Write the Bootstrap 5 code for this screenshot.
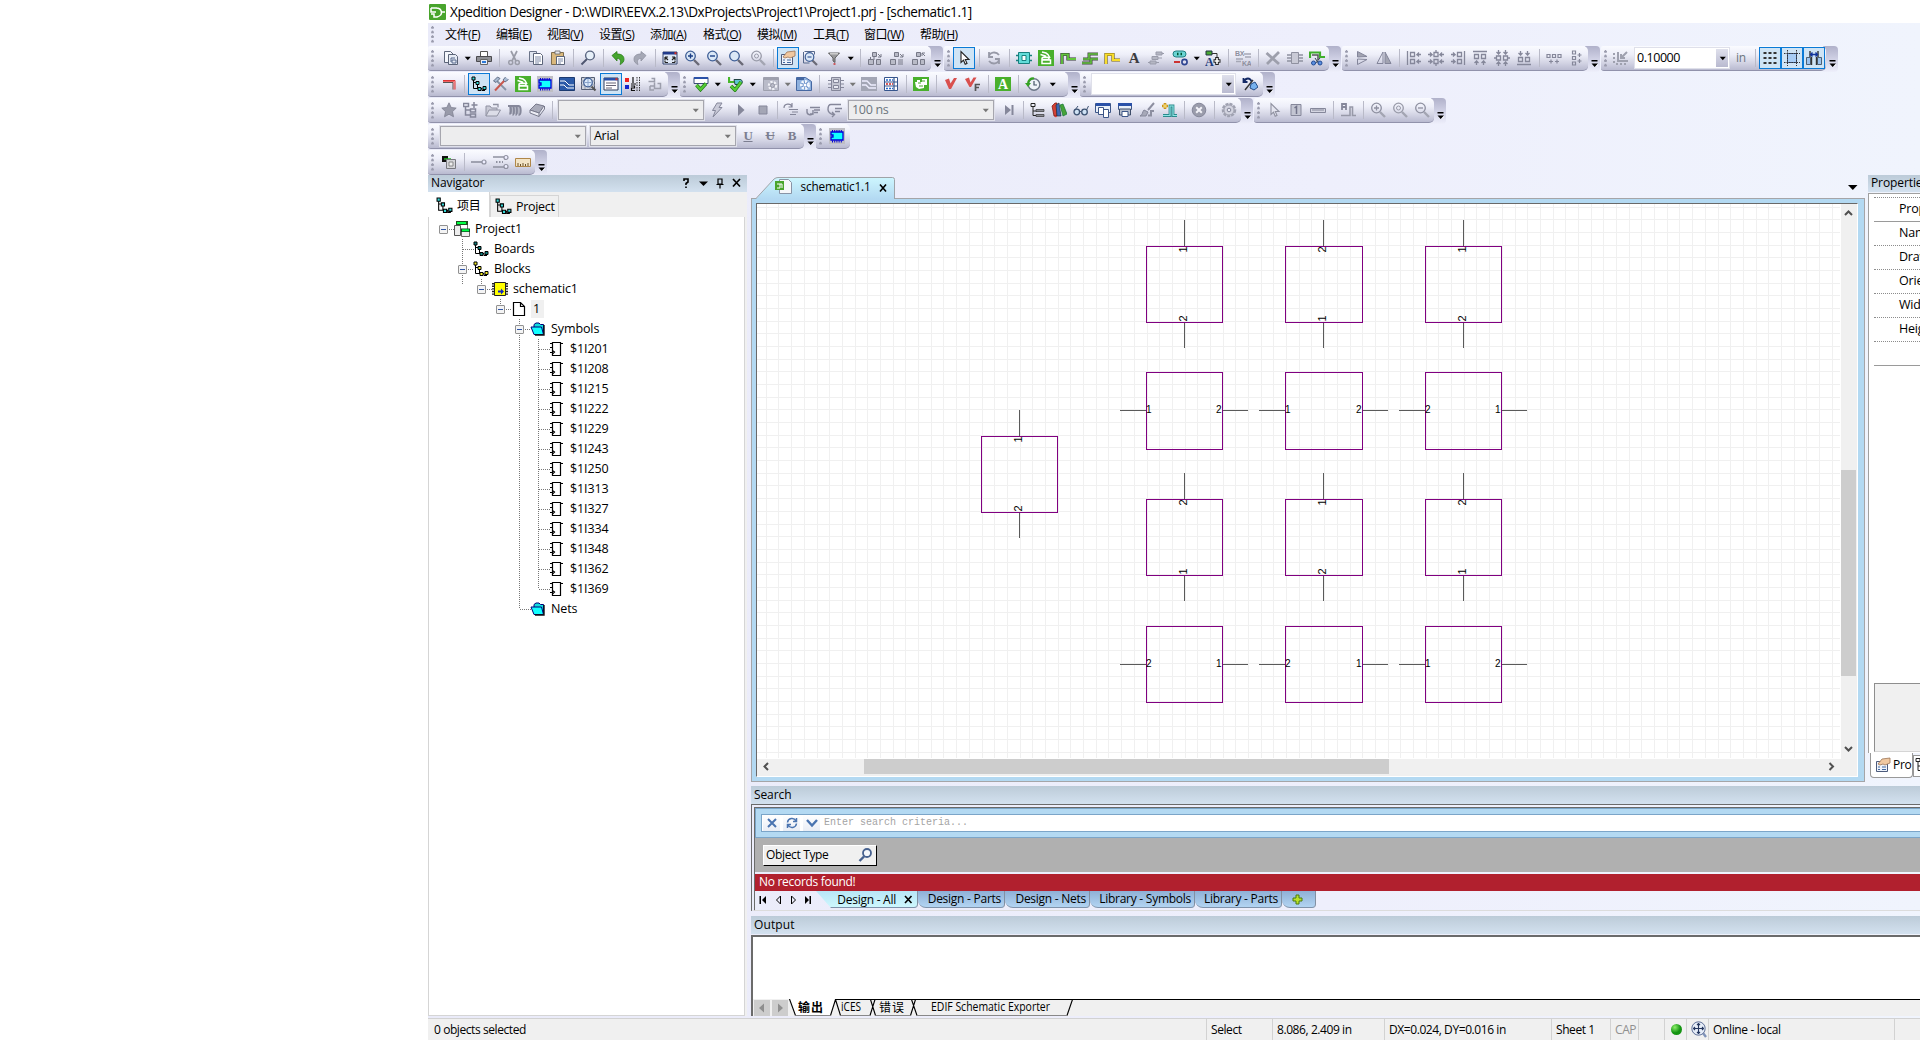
<!DOCTYPE html>
<html lang="zh-CN">
<head>
<meta charset="utf-8">
<title>Xpedition Designer</title>
<link href="https://cdn.jsdelivr.net/npm/bootstrap@5.3.0/dist/css/bootstrap.min.css" rel="stylesheet">
<style>
body{width:1920px;height:1040px;overflow:hidden;background:#fff;color:#000;font:12px/16px "Open Sans","Noto Sans CJK SC",sans-serif;letter-spacing:-.3px}
.app{margin-left:428px;width:1492px;height:1040px;background:linear-gradient(90deg,#eaebf9,#eeeffc 60%,#f0f4fd)}
.titlebar{height:23px;background:#fff;font-size:13.6px;letter-spacing:-.46px;padding-left:1px}
.menurow{height:23px;display:grid;grid-template-columns:17px 51px 51px 52px 51px 53px 54px 56px 51px 56px 60px;align-items:center;white-space:nowrap;letter-spacing:-.45px}
.tbrow{height:26px}
.tbar{height:25px;margin-right:1px}
.tbody{height:25px;background:linear-gradient(#fafbff,#eeeff9 35%,#d3d4e4 70%,#b9bad0);border-bottom:1px solid #9192ab;border-radius:2px 5px 5px 3px;margin-right:-3px;padding-right:1px;position:relative;z-index:1}
.tend{width:15px;height:26px;background:linear-gradient(#b0b1ca,#d6d7ea 60%,#eeeffb);border-radius:0 4px 4px 0;display:flex;align-items:flex-end;justify-content:flex-end}
.tend svg{margin:0 2px 4px 0}
.grip{width:12px;height:17px;flex:none;background:radial-gradient(circle at 1.5px 1.5px,#9b9cae 1.2px,transparent 1.5px) 3px 0/4px 4.6px repeat-y}
.grip.g9{width:9px}.grip.g10{width:10px}
.icn{width:22px;height:22px;flex:none;display:flex;align-items:center;justify-content:center}
.icn.on{background:#cfe4f5;border:1px solid #0a7ad6}
.sep{width:8px;flex:none;height:18px;background:linear-gradient(#b9bac8,#b9bac8) 4px 0/1px 100% no-repeat}
.sep.slim{width:6px;background-position-x:3px}
.dar{width:11px;flex:none;display:flex;justify-content:center}
.combo{height:20px;border:1px solid #a6a6ae;background:#ededee;outline:1px solid #dfe0ea;color:#000;padding:0 3px 0 3px;font-size:12.5px;flex:none}
.combo.wht{background:#fff;border-color:#fff;padding-left:1px;letter-spacing:-.45px}
.combo .dbtn{width:12px;height:18px;background:linear-gradient(#dfe0ec,#b9bad0);margin-right:-3px}
.ser{font:bold 13px/16px "Liberation Serif",serif;color:#7c7e90}
.phead{height:17px;background:linear-gradient(#bccbd8,#d3e1ef);padding-left:3px;padding-right:5px;padding-bottom:1px;letter-spacing:-.1px}
.nav-wrap{width:319px;background:#f0f0f0;height:841px}
.navtabs{height:25px}
.ntab{border:1px solid #d5d5d5;border-bottom:0;background:#f0f0f0;height:22px;padding:0 3px 0 4px}
.ntab.act{background:#fff;height:25px;border:0;padding-top:2px;border-right:1px solid #d5d5d5;width:62px}
.treebox{height:799px;width:317px;background:#fff;border:1px solid #d5d5d5;border-width:0 1px 1px;position:relative;padding-top:2px;font-size:12.5px;letter-spacing:-.1px}
.trow{height:20px;display:flex;align-items:center;position:relative}
.trow .exp{width:9px;height:9px;margin-right:6px;flex:none}
.trow .exp.o{border:1px solid #919191;border-radius:1px;background:linear-gradient(#2f55a8,#2f55a8) 1px 3px/5px 1px no-repeat,#f4f4f4}
.trow svg{margin-right:5px;flex:none}
.l0{padding-left:10px}.l1{padding-left:29px}.l2{padding-left:48px}.l3{padding-left:67px}.l4{padding-left:86px}.l5{padding-left:104px}
.l5 svg{margin-right:6px!important}
.pgno{background:#f0f0f0;padding:1px 4px 1px 2px;margin-left:-1px}
.lines{position:absolute;left:0;top:0}
.rcol{width:1169px;margin-left:4px}
.mditabs{height:23px}
.mditab{position:relative;z-index:1}
.mdi{width:1114px;height:584px;background:#b3d9f2;border:1px solid #a5a5a8;padding:4px}
.mdi-in{height:574px;border:1px solid #fff;border-top:1px solid #696969;border-left:1px solid #696969;background:#f0f0f0;width:1102px}
.vsb{width:15px;background:#f0f0f0;height:555px}
.thumb{background:#cdcdcd}
.vthumb{height:206px}.hthumb{width:525px}
.props{width:52px;overflow:hidden;margin-left:3px}
.pgrid{height:560px;background:#fff;border-left:1px solid #a0a0a0;border-top:1px solid #a0a0a0;margin-top:1px;white-space:nowrap;font-size:12.5px}
.prow{height:24px;border-bottom:1px dotted #8c8c8c;padding:3px 0 0 25px;margin-left:5px;letter-spacing:-.2px}
.prow.sol{border-bottom:1px solid #9a9a9a}
.ptop{height:4px;border-bottom:1px dotted #8c8c8c;margin-left:5px}
.phelp{margin:317px 0 0 5px;height:69px;background:#f0f0f0;border:1px solid #8e8e8e;border-right:0;border-bottom-color:#d5d5d5}
.ptab{width:43px;flex:none;height:25px;margin-left:2px;border:1px solid #999;border-top:0;border-radius:0 0 4px 4px}
.ptab2{height:22px;width:20px;flex:none;margin-top:2px;border:1px solid #999}
.tall{margin-top:5px;height:18px}
.searchp{height:107px;border-left:4px double #6b6b6b;border-top:4px double #6b6b6b;border-bottom:1px solid #dcdcdc}
.sblue{height:30px;background:#b3d9f2;border:1px solid #7ba5c8;border-right:0;padding:5px 0 0 5px}
.sinput{height:18px;background:#fff;border:1px solid #7ba5c8;border-right:0;padding-left:1px;gap:3px}
.sbtn{width:17px;height:16px;background:linear-gradient(#fff,#e9edf5);display:flex;align-items:center;justify-content:center}
.mono{font:10px/14px "Liberation Mono",monospace;letter-spacing:0;color:#a4a4a4;padding-left:1px}
.sgray{height:34px;background:#b0b0b0;padding:7px 0 0 8px}
.otype{width:114px;height:21px;background:#f0f0f0;border:1px solid #fff;border-right-color:#000;border-bottom-color:#000;padding:0 3px 1px 2px;letter-spacing:-.35px}
.redbar{height:17px;background:#b1202e;color:#fff;padding:0 0 1px 4px;margin-top:2px}
.stabs{height:17px}
.stab{height:17px;background:linear-gradient(#8fb0d6,#b2d4f2);border-right:1px solid #8290a2;border-bottom:1px solid #7f93ab;border-radius:0 0 4px 8px;text-align:right;padding-right:3px;white-space:nowrap;letter-spacing:-.26px;line-height:15px}
.stab.act{background:linear-gradient(#b8e6f7,#cdf7fd);clip-path:polygon(0 0,100% 0,100% 100%,15px 100%);gap:8px;padding-right:4px}
.outp{height:64px;background:#fff;border-top:2px solid #6b6b6b;border-left:2px solid #6b6b6b;margin-top:1px}
.otabs{height:17px;background:#f0f0f0}
.sts{height:22px;background:#f0f0f0;border-top:1px solid #d2d2d2;width:1492px;white-space:nowrap;letter-spacing:-.42px}
.sts>div{height:21px;border-right:1px solid #d2d2d2;padding:0 0 0 5px;display:flex;align-items:center;flex:none}
</style>
<script src="https://cdn.jsdelivr.net/npm/bootstrap@5.3.0/dist/js/bootstrap.bundle.min.js"></script>
</head>
<body>
<svg width="0" height="0" class="position-absolute">
<defs>
<symbol id="copydoc" viewBox="0 0 16 16"><path d="M1.500 1.500h6l3 3v8h-9z" fill="#f4f6fb" stroke="#5b6478"/><path d="M5.500 4.500h7l2 2v8h-9z" fill="#e6ebf5" stroke="#5b6478"/><path d="M8 12V8h4M9 10h4v3H9z" fill="none" stroke="#56688c"/></symbol>
<symbol id="print" viewBox="0 0 16 16"><path d="M4.500 1.500h7v5h-7z" fill="#fff" stroke="#555"/><path d="M.5 6.500h15v5H.5z" fill="#8e8f94" stroke="#4a4a4e"/><path d="M4.500 9.500h7v5h-7z" fill="#e9f0fa" stroke="#666"/><path d="M6 12h4" stroke="#2d79d8" stroke-width="2"/></symbol>
<symbol id="cut" viewBox="0 0 16 16"><path d="M5 1l5 10M11 1L6 11" stroke="#9a9ca8" stroke-width="1.700"/><circle cx="4.700" cy="12.500" r="2" fill="none" stroke="#9a9ca8" stroke-width="1.500"/><circle cx="11.300" cy="12.500" r="2" fill="none" stroke="#9a9ca8" stroke-width="1.500"/></symbol>
<symbol id="copy" viewBox="0 0 16 16"><path d="M1.500 1.500h7v10h-7z" fill="#dfe4ee" stroke="#6b7489"/><path d="M5.500 3.500h7l2 2v9h-9z" fill="#fff" stroke="#5b6478"/><path d="M7 7h6M7 9h6M7 11h6M7 13h4" stroke="#7d89a6"/></symbol>
<symbol id="paste" viewBox="0 0 16 16"><path d="M1.500 2.500h12v12h-12z" fill="#d9b87c" stroke="#7e6d4d"/><path d="M5 1h5v3H5z" fill="#e8e8ea" stroke="#666" stroke-width=".8"/><path d="M6.500 6.500h8v8h-8z" fill="#fff" stroke="#5b6478"/><path d="M8 9h5M8 11h5M8 13h3" stroke="#7d89a6"/></symbol>
<symbol id="find" viewBox="0 0 16 16"><path d="M7 9L1.500 14.500" stroke="#4f5670" stroke-width="2"/><circle cx="10" cy="5.500" r="4.400" fill="#e7f0f9" stroke="#596580" stroke-width="1.400"/></symbol>
<symbol id="undo" viewBox="0 0 16 16"><path d="M2 5.500L7 1.500v2.500c5 0 7 2 7 5.500 0 2-1.500 4-4 5 1-2.500 1-6-3-6.200V11z" fill="#46a52e" stroke="#2b7d1b" stroke-width=".8"/></symbol>
<symbol id="redo" viewBox="0 0 16 16"><path d="M14 5.500L9 1.500V4C4 4 2 6 2 9.500c0 2 1.500 4 4 5-1-2.500-1-6 3-6.200V11z" fill="#a5a8b5" stroke="#8e919f" stroke-width=".8"/></symbol>
<symbol id="fit" viewBox="0 0 16 16"><path d="M1 2h14v12H1z" fill="#dfe8f5" stroke="#36476f"/><path d="M1 2h14v2.500H1z" fill="#213a8b"/><path d="M12.500 2.200h2v2h-2z" fill="#d32"/><path d="M3 7h3M3 7v3m3-3M3 7l3 3M13 7h-3m3 0v3m0-3l-3 3M3 12.500h3M3 12.500v-2M13 12.500h-3m3 0v-2" stroke="#222" fill="none" stroke-width="1.200"/></symbol>
<symbol id="zin" viewBox="0 0 16 16"><path d="M10 10l5 5" stroke="#6a6a76" stroke-width="2.400"/><circle cx="6.500" cy="6" r="4.800" fill="#dbe8f7" stroke="#3f5f96" stroke-width="1.300"/><path d="M4 6h5M6.500 3.500v5" stroke="#1c3f86" stroke-width="1.400"/></symbol>
<symbol id="zout" viewBox="0 0 16 16"><path d="M10 10l5 5" stroke="#6a6a76" stroke-width="2.400"/><circle cx="6.500" cy="6" r="4.800" fill="#dbe8f7" stroke="#3f5f96" stroke-width="1.300"/><path d="M4 6h5" stroke="#1c3f86" stroke-width="1.400"/></symbol>
<symbol id="zoom" viewBox="0 0 16 16"><path d="M10 10l5 5" stroke="#6a6a76" stroke-width="2.400"/><circle cx="6.500" cy="6" r="4.800" fill="#dbe8f7" stroke="#3f5f96" stroke-width="1.300"/></symbol>
<symbol id="zoomg" viewBox="0 0 16 16"><path d="M10 10l5 5" stroke="#a3a5b2" stroke-width="2.400"/><circle cx="6.500" cy="6" r="4.800" fill="none" stroke="#999ba9" stroke-width="1.300"/><circle cx="6.500" cy="6" r="2" fill="none" stroke="#999ba9"/></symbol>
<symbol id="zing" viewBox="0 0 16 16"><path d="M10 10l5 5" stroke="#a3a5b2" stroke-width="2.400"/><circle cx="6.500" cy="6" r="4.800" fill="none" stroke="#8e90a0" stroke-width="1.300"/><path d="M4 6h5M6.500 3.500v5" stroke="#8e90a0" stroke-width="1.300"/></symbol>
<symbol id="zoutg" viewBox="0 0 16 16"><path d="M10 10l5 5" stroke="#a3a5b2" stroke-width="2.400"/><circle cx="6.500" cy="6" r="4.800" fill="none" stroke="#8e90a0" stroke-width="1.300"/><path d="M4 6h5" stroke="#8e90a0" stroke-width="1.300"/></symbol>
<symbol id="props" viewBox="0 0 16 16"><path d="M1.500 4.500h11v10h-11z" fill="#eef3fb" stroke="#4c5b7c"/><path d="M3 10h2M7 10h4M3 12.500h2M7 12.500h4" stroke="#42689f"/><path d="M3 7l4-5 8-1v5l-5 2-2-1-3 1z" fill="#f0c8a0" stroke="#9c7454" stroke-width=".8"/></symbol>
<symbol id="zdoc" viewBox="0 0 16 16"><path d="M2.500 1.500h10v3M1.500 2v11h6" fill="none" stroke="#56688c"/><path d="M10 10l5 5" stroke="#6a6a76" stroke-width="2.200"/><circle cx="7.500" cy="7" r="4.300" fill="#dbe8f7" stroke="#3f5f96" stroke-width="1.200"/><path d="M5.500 7h4" stroke="#1c3f86"/></symbol>
<symbol id="filter" viewBox="0 0 16 16"><path d="M2.500 3h11L9 8v4.500L7 11V8z" fill="#9a9a9c" stroke="#555" stroke-width=".9"/><path d="M4 3.800h8" stroke="#eee"/><path d="M7.500 14h2" stroke="#c33" stroke-width="1.500"/></symbol>
<symbol id="h1" viewBox="0 0 16 16"><g fill="#b9bbc7" stroke="#777987"><path d="M5.500 2.500h4v4h-4zM1.500 9.500h5v5h-5zM9.500 9.500h4v5h-4z"/></g><path d="M11 4l3 3m0-3v3h-3M7 6v4M3.500 9V7" stroke="#777987" fill="none"/></symbol>
<symbol id="h2" viewBox="0 0 16 16"><g fill="#b9bbc7" stroke="#777987"><path d="M5.500 2.500h4v4h-4zM1.500 9.500h5v5h-5z"/></g><path d="M11 4l3 3m0-3v3h-3M9 10h5M9 12h5M9 14h5" stroke="#777987" fill="none"/></symbol>
<symbol id="h3" viewBox="0 0 16 16"><g fill="#b9bbc7" stroke="#777987"><path d="M5.500 2.500h4v4h-4zM1.500 9.500h5v5h-5zM9.500 9.500h4v5h-4z"/></g><path d="M14 6l-3-3m0 3V3h3" stroke="#777987" fill="none"/></symbol>
<symbol id="cursor" viewBox="0 0 16 16"><path d="M5 1.500v11l2.500-2.300 1.700 4 1.800-.8-1.700-3.900H13z" fill="#fff" stroke="#222" stroke-width="1.100"/></symbol>
<symbol id="cursorg" viewBox="0 0 16 16"><path d="M5 1.500v11l2.500-2.300 1.700 4 1.800-.8-1.700-3.900H13z" fill="#e4e5ef" stroke="#8f91a0" stroke-width="1.100"/></symbol>
<symbol id="refreshg" viewBox="0 0 16 16"><path d="M3 7c0-5 7-6 10-2M13 9c0 5-7 6-10 2M3 2v5h4M13 14V9H9" fill="none" stroke="#9799a7" stroke-width="1.800"/></symbol>
<symbol id="chip" viewBox="0 0 16 16"><path d="M2.500 2.500h11v11h-11z" fill="#62dcd9" stroke="#17807f"/><path d="M6 5.500h4v5H6z" fill="#fff" stroke="#17807f"/><path d="M0 5.500h2.500M0 10.500h2.500M13.500 5.500H16M13.500 10.500H16" stroke="#17807f" stroke-width="1.500"/></symbol>
<symbol id="glogo" viewBox="0 0 16 16"><path d="M0 0h16v16H0z" fill="#49b02c"/><path d="M4 2l4 1c2 1 3 2 4 5M2.500 4.500l5 1.500v2M4 8.500c0-2 7-2 7 0v1H4zM4 10h8.500v3.500H4z" fill="none" stroke="#fff" stroke-width="1.500"/></symbol>
<symbol id="net1" viewBox="0 0 16 16"><path d="M2 14V4.500h6V9h8" fill="none" stroke="#333" stroke-width="3.200"/><path d="M2 14V4.500h6V9h8" fill="none" stroke="#62c63d" stroke-width="1.800"/></symbol>
<symbol id="net2" viewBox="0 0 16 16"><path d="M0 13h9V9h7M1 9h6V4h9" fill="none" stroke="#444" stroke-width="3"/><path d="M0 13h9V9h7M1 9h6V4h9" fill="none" stroke="#62c63d" stroke-width="1.600"/></symbol>
<symbol id="net3" viewBox="0 0 16 16"><path d="M2 14V4.500h7V10h7" fill="none" stroke="#7a6512" stroke-width="3.200"/><path d="M2 14V4.500h7V10h7" fill="none" stroke="#f7dc2c" stroke-width="2"/></symbol>
<symbol id="stackg" viewBox="0 0 16 16"><path d="M8 2h6v3H8zM4 6.500h6v3H4zM2 11h6v3H2zM14 3.500h2M10 8h4M0 12.500h2M8 12.500h3" fill="#b4b6c3" stroke="#9a9cab"/></symbol>
<symbol id="conn" viewBox="0 0 16 16"><rect x="1" y="1" width="13" height="6" rx="3" fill="#6ad4d3" stroke="#217f80"/><path d="M5 4h1.500M8.500 4H10" stroke="#053" stroke-width="2.500"/><path d="M2 12h6" stroke="#c33" stroke-width="2"/><circle cx="12.500" cy="12" r="2.600" fill="#dde" stroke="#2c4390" stroke-width="1.600"/></symbol>
<symbol id="aplus" viewBox="0 0 16 16"><path d="M1 1h6v4H1z" fill="#48a832" stroke="#234"/><path d="M7 3.500h5v4" fill="none" stroke="#333"/><text x="0" y="15.500" font-family="Liberation Serif" font-weight="700" font-size="12" fill="#1a3877">A</text><path d="M12 7v8M8.500 11h7" stroke="#222" stroke-width="3.600"/><path d="M12 8v6M9.500 11h5" stroke="#fff" stroke-width="1.600"/></symbol>
<symbol id="swapg" viewBox="0 0 16 16"><text x="0" y="6" font-family="Liberation Sans" font-weight="700" font-size="7" fill="#8e909e">BX</text><text x="7" y="15.500" font-family="Liberation Sans" font-weight="700" font-size="7" fill="#8e909e">KA</text><path d="M1 9h7M1 11.500h5M9 4h7M10 7h6" stroke="#a5a7b5" stroke-width="1.500"/></symbol>
<symbol id="xg" viewBox="0 0 16 16"><path d="M1.500 3L14 14M14 2L2 14" stroke="#9d9fac" stroke-width="2.800"/></symbol>
<symbol id="chipg" viewBox="0 0 16 16"><path d="M4.500 2.500h7v11h-7z" fill="#c9cad6" stroke="#8f91a0"/><path d="M0 5h4M0 8h4M0 11h4M12 5h4M12 8h4M12 11h4" stroke="#8f91a0" stroke-width="1.400"/></symbol>
<symbol id="cutnet" viewBox="0 0 16 16"><path d="M1 8V2.500h10V7h5" fill="none" stroke="#3faf2b" stroke-width="2.200"/><path d="M3 5h6v5" stroke="#555" fill="none" stroke-width="1.500"/><path d="M6 8l4 6M11 8l-5 6" stroke="#345"/><circle cx="4.500" cy="13" r="2" fill="#5b8fe0" stroke="#234c96"/><circle cx="11" cy="13" r="2" fill="#5b8fe0" stroke="#234c96"/></symbol>
<symbol id="flipv" viewBox="0 0 16 16"><path d="M3.500 1.500V7L13 6.500z" fill="#a2a4b2" stroke="#83859a"/><path d="M3.500 14.500V9L13 9.500z" fill="none" stroke="#83859a"/></symbol>
<symbol id="fliph" viewBox="0 0 16 16"><path d="M7 2v11.500H1z" fill="none" stroke="#83859a"/><path d="M9 2v11.500h6z" fill="#a2a4b2" stroke="#83859a"/></symbol>
<symbol id="al1" viewBox="0 0 16 16"><path d="M1.500 1v14M4.500 2.500h4v4h-4zM4.500 9.500h4v4h-4zM15 4.500h-4l2-2m-2 2l2 2M15 11.500h-4l2-2m-2 2l2 2" fill="none" stroke="#85879a" stroke-width="1.300"/></symbol>
<symbol id="al2" viewBox="0 0 16 16"><path d="M6 2.500h4v4H6zM6 9.500h4v4H6zM8 0v2M8 14v2M0 4.500h4l-2-2m2 2l-2 2M0 11.500h4l-2-2m2 2l-2 2M16 4.500h-4l2-2m-2 2l2 2M16 11.500h-4l2-2m-2 2l2 2" fill="none" stroke="#85879a" stroke-width="1.300"/></symbol>
<symbol id="al3" viewBox="0 0 16 16"><path d="M14.500 1v14M7.500 2.500h4v4h-4zM7.500 9.500h4v4h-4zM1 4.500h4l-2-2m2 2l-2 2M1 11.500h4l-2-2m2 2l-2 2" fill="none" stroke="#85879a" stroke-width="1.300"/></symbol>
<symbol id="al4" viewBox="0 0 16 16"><path d="M1 1.500h14M2.500 4.500h4v4h-4zM9.500 4.500h4v4h-4zM4.500 15v-4l-2 2m2-2l2 2M11.500 15v-4l-2 2m2-2l2 2" fill="none" stroke="#85879a" stroke-width="1.300"/></symbol>
<symbol id="al5" viewBox="0 0 16 16"><path d="M2.500 6h4v4h-4zM9.500 6h4v4h-4zM0 8h2M14 8h2M4.500 0v4l-2-2m2 2l2-2M11.500 0v4l-2-2m2 2l2-2M4.500 16v-4l-2 2m2-2l2 2M11.500 16v-4l-2 2m2-2l2 2" fill="none" stroke="#85879a" stroke-width="1.300"/></symbol>
<symbol id="al6" viewBox="0 0 16 16"><path d="M1 14.500h14M2.500 7.500h4v4h-4zM9.500 7.500h4v4h-4zM4.500 1v4l-2-2m2 2l2-2M11.500 1v4l-2-2m2 2l2-2" fill="none" stroke="#85879a" stroke-width="1.300"/></symbol>
<symbol id="d1" viewBox="0 0 16 16"><path d="M1 4.500h3v3H1zM6.500 4.500h3v3h-3zM12 4.500h3v3h-3zM3 11.500h4M9 11.500h4M5 9.500v4M11 9.500v4" fill="none" stroke="#85879a" stroke-width="1.200"/></symbol>
<symbol id="d2" viewBox="0 0 16 16"><path d="M4.500 1h3v3h-3zM4.500 6.500h3v3h-3zM4.500 12h3v3h-3zM11.500 3v4M11.500 9v4M9.500 5h4M9.500 11h4" fill="none" stroke="#85879a" stroke-width="1.200"/></symbol>
<symbol id="scaleg" viewBox="0 0 16 16"><path d="M5 2v9h10M14 2L8 8M8 4v4h4" fill="none" stroke="#9fa1af" stroke-width="2"/><path d="M1 3v10M3 14h12" stroke="#9fa1af" stroke-width="2" stroke-dasharray="2 2"/></symbol>
<symbol id="grid9" viewBox="0 0 16 16"><path d="M1.500 3h14M1.500 8h14M1.500 13h14" stroke="#333" stroke-width="2" stroke-dasharray="3 2"/></symbol>
<symbol id="crop" viewBox="0 0 16 16"><path d="M3.500 3.500h9v9h-9z" fill="#a8cdf5" stroke="#395a8e"/><path d="M3.500 0v16M12.500 0v16M0 3.500h16M0 12.500h16" stroke="#333" stroke-dasharray="1.500 1"/></symbol>
<symbol id="meas" viewBox="0 0 16 16"><path d="M.500 7.500h4v7h-4zM11.500 7.500h4v7h-4z" fill="#9cc3ee" stroke="#345" stroke-width=".8"/><path d="M4 1v6M12 1v6M5.500 7v8M10.500 7v8" stroke="#333" stroke-width="1.400"/><path d="M4.500 4.500h7M6.500 2.500l-2 2 2 2M9.500 2.500l2 2-2 2" stroke="#12349c" fill="none" stroke-width="1.400"/></symbol>
<symbol id="redl" viewBox="0 0 16 16"><path d="M2 4.500h12v9" fill="none" stroke="#d33"/><path d="M2 6.500h10v7" fill="none" stroke="#555"/><path d="M2 5.500h11v8" fill="none" stroke="#e66"/></symbol>
<symbol id="treei" viewBox="0 0 16 16"><path d="M2.500 2v10.500H7M2.500 6.500h4v6H11v2h3" fill="none" stroke="#000"/><path d="M1 1h3v3H1zM5 5.500h3v3H5zM7 11.500h3v3H7zM12 10.500h3v3h-3z" fill="#35d8d8" stroke="#000"/></symbol>
<symbol id="treed" viewBox="0 0 16 16"><path d="M2.500 2v10.500H7M2.500 6.500h4v6H11v2h3" fill="none" stroke="#000"/><path d="M1 1h3v3H1zM5 5.500h3v3H5zM7 11.500h3v3H7zM12 10.500h3v3h-3z" fill="#0f8080" stroke="#000"/></symbol>
<symbol id="treey" viewBox="0 0 16 16"><path d="M2.500 2v10.500H7M2.500 6.500h4v6H11v2h3" fill="none" stroke="#000"/><path d="M1 1h3v3H1zM5 5.500h3v3H5zM7 11.500h3v3H7zM12 10.500h3v3h-3z" fill="#f6ee24" stroke="#000"/></symbol>
<symbol id="tools" viewBox="0 0 16 16"><path d="M3 4l10 10" stroke="#8793a6" stroke-width="1.800"/><path d="M.500 5l4-4 2.500 1.500-4 4zM12.500 1l-2.500 3 2 2 3.500-2.500" fill="#a9bad2" stroke="#5a6880" stroke-width=".9"/><path d="M11 5L2 14.500" stroke="#c8584e" stroke-width="2"/></symbol>
<symbol id="bchip" viewBox="0 0 16 16"><path d="M0 0h16v16H0z" fill="#bfbfc4"/><path d="M2 4h12v8H2v-3h2V7H2z" fill="#1ff" stroke="#0000d8" stroke-width="1.300"/><path d="M3 3h11M3 13.500h11" stroke="#0000d8" stroke-width="2" stroke-dasharray="1 1.200"/></symbol>
<symbol id="dblue" viewBox="0 0 16 16"><path d="M.500 1.500h15v13H.5z" fill="#2b5aa8" stroke="#1c3a70"/><path d="M1 5h5l4 4h5M1 9h4l3 3h7" stroke="#fff" fill="none"/></symbol>
<symbol id="lens" viewBox="0 0 16 16"><path d="M.500 1.500h13v12H.5z" fill="#cfd4dd" stroke="#555f74"/><path d="M4 1v12M9 1v12M0 5h14M0 9h14" stroke="#939cad"/><path d="M10.500 10.500l4 4" stroke="#555" stroke-width="2.200"/><circle cx="7" cy="6.500" r="4.300" fill="#dcebfb" stroke="#3f5f96" stroke-width="1.200"/><path d="M7 3v7M3.500 6.500h7" stroke="#8aa5cc"/></symbol>
<symbol id="dialog" viewBox="0 0 16 16"><path d="M1 2h14v12H1z" fill="#fff" stroke="#2c3c5c"/><path d="M1 2h14v2.500H1z" fill="#2a51a8"/><path d="M12.500 2.200h2v2h-2z" fill="#d32"/><path d="M3 7h10M3 9.500h10M3 12h6" stroke="#667"/></symbol>
<symbol id="one2" viewBox="0 0 16 16"><path d="M0 2h4v4H0z" fill="#e22"/><path d="M0 9h4v4H0z" fill="#12c"/><path d="M8 1v6M6 8h5M6 10h3.500v2H6.500v2.500H10" stroke="#111" fill="none" stroke-width="1.200"/><path d="M12 1v14M14.500 1v14" stroke="#333" stroke-dasharray="1.500 1"/></symbol>
<symbol id="arrg" viewBox="0 0 16 16"><path d="M1.500 5.500h6v-3h-3M7.500 6.500v6h6v-5h-3M3 10h4M3 10v4h4" fill="none" stroke="#9c9eac" stroke-width="1.500"/></symbol>
<symbol id="chkflag" viewBox="0 0 16 16"><path d="M1 1.500h14v6H1z" fill="#fff" stroke="#3b4c78"/><path d="M1 1h14v2H1z" fill="#2a51a8"/><path d="M3.500 9l4 4.500 5.500-6" fill="none" stroke="#1f7616" stroke-width="3.600"/><path d="M3.500 9l4 4.500 5.500-6" fill="none" stroke="#55cc35" stroke-width="2.200"/></symbol>
<symbol id="chknet" viewBox="0 0 16 16"><path d="M1 1v5h5" stroke="#49b82d" stroke-width="2.200" fill="none"/><path d="M6 3.500h6c3 0 3 5 0 5H7z" fill="#5fc7d1" stroke="#244"/><path d="M3 10l4 4 6-8" fill="none" stroke="#1f7616" stroke-width="3.600"/><path d="M3 10l4 4 6-8" fill="none" stroke="#55cc35" stroke-width="2.200"/></symbol>
<symbol id="gearg" viewBox="0 0 16 16"><path d="M.500 1.500h15v13H.5z" fill="#b9bbc9" stroke="#9ea0ae"/><path d="M1 2h14v2H1z" fill="#9ea0ae"/><circle cx="9.500" cy="9.500" r="3.200" fill="none" stroke="#f0f1f7" stroke-width="3" stroke-dasharray="2 1.200"/><circle cx="9.500" cy="9.500" r="2" fill="none" stroke="#8f91a0"/></symbol>
<symbol id="gearb" viewBox="0 0 16 16"><path d="M.500 1.500h9l6 4v9H.5z" fill="#8fb1de" stroke="#4668a2"/><path d="M1 2h7v2H1z" fill="#4668a2"/><circle cx="9" cy="9" r="3.500" fill="#5d86c4" stroke="#f4f8fe" stroke-width="3" stroke-dasharray="2 1.200"/><circle cx="9" cy="9" r="1.500" fill="#fff"/></symbol>
<symbol id="filmg" viewBox="0 0 16 16"><path d="M3.500 1.500h9v13h-9z" fill="#c3c5d1" stroke="#85879a"/><path d="M5.500 3.500h5v3h-5zM5.500 9.500h5v3h-5zM0 4.500h3M0 8h3M0 11.500h3M13 4.500h3M13 8h3M13 11.500h3" stroke="#85879a" fill="#e8e9f2"/></symbol>
<symbol id="waveg" viewBox="0 0 16 16"><path d="M0 1h16v14H0z" fill="#a3a6b5"/><path d="M1 5h5l4 4h5M1 9h4l3 3h7" stroke="#eef" fill="none" stroke-width="1.300"/></symbol>
<symbol id="table" viewBox="0 0 16 16"><path d="M1.500 1.500h13v13h-13z" fill="#fff" stroke="#36558d"/><path d="M1.500 6h13M1.500 10h13M11 1v14" stroke="#36558d" stroke-width="1.200"/><path d="M3 4h7M3 12.500h7" stroke="#26c" stroke-dasharray="2 1" stroke-width="1.400"/><path d="M3 8h7" stroke="#c22" stroke-dasharray="2 1" stroke-width="1.400"/></symbol>
<symbol id="green2" viewBox="0 0 16 16"><path d="M0 1h16v14H0z" fill="#49b02c"/><path d="M2 6h2V4h3v2h2V3h5v6h-3v3l-5 1-3-2z" fill="#fff"/><path d="M5 7h3M9 5h3M6 10h4" stroke="#49a52c" stroke-width="1.200"/></symbol>
<symbol id="vee" viewBox="0 0 16 16"><path d="M2 4l4-1.500 1.500 5L11 2l3 0L8 13H6z" fill="#d9504e"/></symbol>
<symbol id="veef" viewBox="0 0 16 16"><path d="M0 3l4-1.500 1.500 5L8.500 1.500l3 0L6 11H4.500z" fill="#d9504e"/><path d="M10.500 15V8.500H15M10.500 11.500h3.500" fill="none" stroke="#555" stroke-width="1.700"/></symbol>
<symbol id="agreen" viewBox="0 0 16 16"><path d="M0 1h16v14H0z" fill="#49b02c"/><text x="3" y="13" font-family="Liberation Serif" font-weight="700" font-size="14" fill="#fff">A</text></symbol>
<symbol id="clock" viewBox="0 0 16 16"><circle cx="9" cy="8.500" r="5.800" fill="#eef3f8" stroke="#6b7687" stroke-width="1.400"/><path d="M9 5v4h3" stroke="#456" fill="none" stroke-width="1.200"/><path d="M9 2.500C6 2 3 4 3 8" stroke="#35a323" stroke-width="2.200" fill="none"/><path d="M0 7h6l-3 4z" fill="#35a323"/></symbol>
<symbol id="undok" viewBox="0 0 16 16"><path d="M2 5.500c2-4 6-4 7.500 0M1.500 2v4h4" fill="none" stroke="#152b66" stroke-width="1.800"/><path d="M3 14L11 4" stroke="#333" stroke-width="1.400"/><path d="M9 8l4-2 3 5-4 3-4-2z" fill="#77b2ee" stroke="#234c86"/></symbol>
<symbol id="starg" viewBox="0 0 16 16"><path d="M8 .8l2.200 4.700 5 .6-3.700 3.500 1 5.200L8 12.200 3.500 14.800l1-5.200L.8 6.100l5-.6z" fill="#989aa9" stroke="#7e8092" stroke-width=".8"/></symbol>
<symbol id="treeg" viewBox="0 0 16 16"><path d="M.500 1.500h5v3h-5zM2.500 5v8H7M2.500 8H7M7.500 7h5v3h-5zM7.500 12h5v3h-5zM11 0v6M8.500 3h6" fill="none" stroke="#85879a" stroke-width="1.500"/></symbol>
<symbol id="foldg" viewBox="0 0 16 16"><path d="M1 14V4h4l1.500 2H12v2" fill="#c9cad6" stroke="#9092a2"/><path d="M1 14L4 8h11.500L12 14z" fill="#dcdde8" stroke="#9092a2"/><path d="M8 2.500h5v3" fill="none" stroke="#9092a2" stroke-width="1.300"/></symbol>
<symbol id="coilg" viewBox="0 0 16 16"><path d="M2 5h12v7H2z" fill="#b4b6c4"/><path d="M2.500 4c2 0 2 8 0 8M5.500 4c2 0 2 9 0 9M8.500 4c2 0 2 9 0 9M11.500 4c3 0 3 9 0 9M1 4h11" fill="none" stroke="#85879a" stroke-width="1.800"/></symbol>
<symbol id="bookg" viewBox="0 0 16 16"><path d="M1 8l6-6 8 2-5 7z" fill="#a9abba" stroke="#77798b"/><path d="M1 8l9 3v3.500l-9-3.500zM10 14.500L15.500 7V4" fill="#ecedf5" stroke="#77798b"/></symbol>
<symbol id="boltg" viewBox="0 0 16 16"><path d="M8 1h5l-3 4.500h3L4 15l2.500-6.500H3.500z" fill="#c9cad8" stroke="#85879a"/></symbol>
<symbol id="playg" viewBox="0 0 16 16"><path d="M5 2l6.500 6L5 14z" fill="#85879a"/></symbol>
<symbol id="stopg" viewBox="0 0 16 16"><path d="M4 4h8v8H4z" fill="#a4a6b5" stroke="#85879a"/></symbol>
<symbol id="step1" viewBox="0 0 16 16"><path d="M1 6c0-5 7-5 8-1M9 1v4H5.500" fill="none" stroke="#85879a" stroke-width="1.200"/><path d="M6 7.500h9M9 10h6M7 12.500h6" stroke="#85879a" stroke-width="1.200"/></symbol>
<symbol id="step2" viewBox="0 0 16 16"><path d="M2 7v3c0 3 5 4 6 1M8 8v4H5" fill="none" stroke="#85879a" stroke-width="1.400"/><path d="M5 5.500h10M9 8h6M9 10.500h4" stroke="#85879a" stroke-width="1.300"/></symbol>
<symbol id="step3" viewBox="0 0 16 16"><path d="M14 2.500H4c-3 0-3 3-3 5s2 5 6 5M5 10l2.500 2.500L5 15" fill="none" stroke="#85879a" stroke-width="1.400"/><path d="M8 6.500h7M8 9.500h5" stroke="#85879a" stroke-width="1.300"/></symbol>
<symbol id="nextg" viewBox="0 0 16 16"><path d="M4 3l6 5-6 5z" fill="#85879a"/><path d="M11.500 3v10" stroke="#85879a" stroke-width="2"/></symbol>
<symbol id="tree2" viewBox="0 0 16 16"><path d="M2 1.500h4v3H2zM4 5v8.500h4M4 9h4" fill="none" stroke="#222"/><path d="M7 7.500h8v2H7zM7 12.500h8v2H7z" fill="#8a8c94" stroke="#333" stroke-width=".7"/></symbol>
<symbol id="books" viewBox="0 0 16 16"><path d="M1 4l3-3h2v13H3z" fill="#d34234" stroke="#711" stroke-width=".7"/><path d="M5 3l3-2 2 13H6z" fill="#3b68b5" stroke="#234" stroke-width=".7"/><path d="M9 3l3-1 4 10-4 2z" fill="#47a339" stroke="#173" stroke-width=".7"/><path d="M3 14h3l-1 1.500z" fill="#d33"/></symbol>
<symbol id="glass" viewBox="0 0 16 16"><circle cx="3.800" cy="10" r="2.800" fill="#cfe2f4" stroke="#3c5272" stroke-width="1.300"/><circle cx="11.500" cy="10" r="2.800" fill="#cfe2f4" stroke="#3c5272" stroke-width="1.300"/><path d="M6.500 9.500h2M2 8l3-4M13.500 8L15.500 4" stroke="#3c5272"/></symbol>
<symbol id="wins" viewBox="0 0 16 16"><path d="M.500 1.500h15v9H.5z" fill="#e9f0f9" stroke="#3d5688"/><path d="M1 1h14v3H1z" fill="#2a51a8"/><path d="M3.500 5.500h5v7h-5zM8.500 7.500h5v8h-5z" fill="#fff" stroke="#3d5688"/></symbol>
<symbol id="pwin" viewBox="0 0 16 16"><path d="M1.500 1.500h13v6h-13z" fill="#e9f0f9" stroke="#3d5688"/><path d="M1 1h14v3H1z" fill="#2a51a8"/><path d="M2.500 7h11v6h-11z" fill="#b8bfcc" stroke="#3d4c68"/><path d="M5 9.500h6v5H5z" fill="#fff" stroke="#3d5688"/></symbol>
<symbol id="brush" viewBox="0 0 16 16"><path d="M15 1l-6 7M9 13.500h3V9h3" fill="none" stroke="#8d8fa0" stroke-width="2"/><path d="M5 8l4 2-2 4H1c3-1 2-4 4-6z" fill="#a7a9b8" stroke="#85879a"/></symbol>
<symbol id="pulse" viewBox="0 0 16 16"><path d="M2 13.500h7V4h3v9.500h4" fill="none" stroke="#2b8a8c" stroke-width="2.800"/><path d="M2 13.500h7V4h3v9.500h4" fill="none" stroke="#8fe6e6" stroke-width="1.100"/><path d="M4 1v6M1 4h6" stroke="#c8941c" stroke-width="2.600"/><path d="M4 2v4M2 4h4" stroke="#ffe780"/></symbol>
<symbol id="xcirc" viewBox="0 0 16 16"><circle cx="8" cy="8" r="6.800" fill="#9a9cab" stroke="#85879a"/><path d="M5.200 5.200l5.600 5.600M10.800 5.200l-5.600 5.600" stroke="#f2f2f8" stroke-width="2"/></symbol>
<symbol id="gearc" viewBox="0 0 16 16"><circle cx="8" cy="8" r="6" fill="#d3d4e0" stroke="#a0a2b1" stroke-width="2.500" stroke-dasharray="3 1"/><circle cx="8" cy="8" r="5" fill="#d3d4e0" stroke="#a0a2b1"/><circle cx="8" cy="8" r="1.800" fill="#e8e9f2" stroke="#85879a"/></symbol>
<symbol id="oneb" viewBox="0 0 16 16"><path d="M3 2.500h10v11H3z" fill="#c3c5d2" stroke="#85879a"/><path d="M6.500 6L8.500 4.500V12" stroke="#72748a" fill="none" stroke-width="1.500"/></symbol>
<symbol id="rulg" viewBox="0 0 16 16"><path d="M.500 6.500h15v4H.5z" fill="#d5d6e2" stroke="#85879a"/><path d="M3 7v2M5 7v2M7 7v2M9 7v2M11 7v2M13 7v2" stroke="#85879a"/></symbol>
<symbol id="agr" viewBox="0 0 16 16"><path d="M2 8V2h4v6M2 5h4" fill="none" stroke="#85879a" stroke-width="1.800"/><path d="M1 13.500h9V5h2.500v8.500H16" fill="none" stroke="#9799a8" stroke-width="1.600"/></symbol>
<symbol id="blkg" viewBox="0 0 16 16"><path d="M1 2h6v6H1z" fill="#111"/><path d="M3 5h7" stroke="#2b2" stroke-width="1.500"/><path d="M5.500 5.500h9v9h-9z" fill="#d4d4d8" stroke="#77787e"/><path d="M8 8h4v4H8z" fill="#eee" stroke="#888"/></symbol>
<symbol id="slid" viewBox="0 0 16 16"><path d="M0 8h11" stroke="#8f91a0" stroke-width="1.600"/><circle cx="13" cy="8" r="2" fill="#eef" stroke="#8f91a0" stroke-width="1.200"/></symbol>
<symbol id="slids" viewBox="0 0 16 16"><path d="M0 3h11M0 13h11" stroke="#8f91a0" stroke-width="1.600"/><path d="M3 8h7" stroke="#8f91a0" stroke-dasharray="1.500 1.500" stroke-width="2"/><circle cx="13" cy="3.500" r="2" fill="#eef" stroke="#8f91a0" stroke-width="1.200"/><circle cx="13" cy="12.500" r="2" fill="#eef" stroke="#8f91a0" stroke-width="1.200"/></symbol>
<symbol id="rult" viewBox="0 0 16 16"><path d="M.500 4.500h15v8H.5z" fill="#f3e4c6" stroke="#b08748"/><path d="M3 12V9M5.500 12v-2M8 12V9M10.500 12v-2M13 12V9" stroke="#6c5228"/></symbol>
<symbol id="proj" viewBox="0 0 16 16"><path d="M2.500 1.500h11v9h-11z" fill="#fff" stroke="#777"/><path d="M2 0h12v4H2z" fill="#1c4f1c"/><path d="M3 1h9v2H3z" fill="#0f4"/><path d="M.500 4.500h6v10h-6z" fill="#eee" stroke="#555"/><path d="M7.500 8.500h8v7h-8z" fill="#eee" stroke="#666"/><path d="M7 7.500h9v3.500H7z" fill="#142"/><path d="M8 8.300h7v2H8z" fill="#0f4"/></symbol>
<symbol id="sch" viewBox="0 0 16 16"><path d="M2.500 1.500h11v13h-11z" fill="#ff0" stroke="#222"/><path d="M1 2v13M15 2v13" stroke="#222" stroke-width="2" stroke-dasharray="1.400 1.200"/><path d="M6 9.500h3V7.500l3 3-3 3v-2H6z" fill="#1226c0"/></symbol>
<symbol id="page" viewBox="0 0 16 16"><path d="M2.500 1.500h7l4 4v9h-11zM9.500 1.500v4h4" fill="#fff" stroke="#000" stroke-width="1.200"/></symbol>
<symbol id="fold" viewBox="0 0 16 16"><path d="M4 6V3.500L6 2h3l1.500 1.500H13.500V13" fill="#1dd" stroke="#00007c"/><path d="M1 6h10.500l2 7.500H4z" fill="#1ff" stroke="#00007c"/><path d="M14 4v10H5" fill="none" stroke="#111" stroke-width="1.400"/></symbol>
<symbol id="symb" viewBox="0 0 16 16"><path d="M4.500 1.500h8v13h-8zM2 2.500h3M12 2.500h3M2 6.500h2M2 11.500h3M4 9l2.500 2L4 13.500" fill="#fff" stroke="#000" stroke-width="1.200"/></symbol>
<symbol id="dn" viewBox="0 0 8 8"><path d="M1.500 2.500h5.500L4.250 5.500z" fill="#000"/></symbol>
<symbol id="dng" viewBox="0 0 8 8"><path d="M1.500 2.500h5.500L4.250 5.500z" fill="#777"/></symbol>
<symbol id="ofl" viewBox="0 0 8 8"><path d="M1.500 0h6v1.500h-6zM1.500 3.500h6.500L4.700 7z" fill="#000"/><path d="M6 6.500l2.500-2.500" stroke="#fff"/></symbol>
</defs></svg>

<div class="app d-flex flex-column">
  <div class="titlebar d-flex align-items-center">
    <svg width="17" height="16" viewBox="0 0 17 16" class="me-1"><rect width="17" height="16" rx="1" fill="#48a42c"/><path d="M2 4h6M2 4v4h5M7 4c6 0 8 7 1 9H5v-3H2M13 8h3" fill="none" stroke="#fff" stroke-width="1.500"/></svg>
    <span class="text-nowrap">Xpedition Designer - D:\WDIR\EEVX.2.13\DxProjects\Project1\Project1.prj - [schematic1.1]</span>
  </div>
  <div class="menurow"><i class="grip"></i><span>文件(<u>F</u>)</span><span>编辑(<u>E</u>)</span><span>视图(<u>V</u>)</span><span>设置(<u>S</u>)</span><span>添加(<u>A</u>)</span><span>格式(<u>O</u>)</span><span>模拟(<u>M</u>)</span><span>工具(<u>T</u>)</span><span>窗口(<u>W</u>)</span><span>帮助(<u>H</u>)</span></div>

  <div class="tbrow d-flex">
    <div class="tbar d-flex"><div class="tbody d-flex align-items-center" data-icons="G12 copydoc v print - cut copy paste - find - undo redo - fit zin zout zoom zoomg - *props zdoc s2 filter v - h1 h2 h3"></div><div class="tend"></div></div>
    <div class="tbar d-flex"><div class="tbody d-flex align-items-center" data-icons="G9 *cursor - refreshg - chip glogo net1 net2 net3 =A stackg s2 conn v aplus - swapg - xg chipg cutnet"></div><div class="tend"></div></div>
    <div class="tbar d-flex"><div class="tbody d-flex align-items-center" data-icons="G9 flipv fliph - al1 al2 al3 al4 al5 al6 - d1 d2"></div><div class="tend"></div></div>
    <div class="tbar d-flex"><div class="tbody d-flex align-items-center"><span class="d-flex align-items-center" data-icons="G9 scaleg s3"></span><div class="combo wht d-flex justify-content-between align-items-center" style="width:94px"><span>0.10000</span><span class="dbtn d-flex align-items-center justify-content-center"><svg width="9" height="9"><use href="#dn"/></svg></span></div><span class="text-secondary" style="width:22px;padding-left:7px">in</span><span class="d-flex align-items-center" data-icons="- *grid9 *crop *meas"></span></div><div class="tend"></div></div>
  </div>
  <div class="tbrow d-flex">
    <div class="tbar d-flex me-0"><div class="tbody d-flex align-items-center" data-icons="G10 redl - *treei tools glogo bchip dblue lens *dialog one2 arrg s1"></div><div class="tend"></div></div>
    <div class="tbar d-flex me-0"><div class="tbody d-flex align-items-center" data-icons="G10 chkflag v s2 chknet v s2 gearg x gearb - s2 filmg x waveg table - green2 - vee veef - agreen - clock s3 v s9"></div><div class="tend"></div></div>
    <div class="tbar d-flex"><div class="tbody d-flex align-items-center"><i class="grip"></i><div class="combo wht d-flex justify-content-end align-items-center" style="width:143px"><span class="dbtn d-flex align-items-center justify-content-center"><svg width="9" height="9"><use href="#dn"/></svg></span></div><span class="d-flex" data-icons="s4 undok s1"></span></div><div class="tend"></div></div>
  </div>
  <div class="tbrow d-flex">
    <div class="tbar d-flex"><div class="tbody d-flex align-items-center"><span class="d-flex align-items-center" data-icons="G10 starg treeg foldg coilg bookg - s2"></span><div class="combo d-flex justify-content-end align-items-center" style="width:146px"><svg width="9" height="9"><use href="#dng"/></svg></div><span class="d-flex align-items-center" data-icons="s2 boltg s2 playg stopg ~ step1 step2 step3 s2"></span><div class="combo d-flex justify-content-between align-items-center text-secondary" style="width:146px"><span>100 ns</span><svg width="9" height="9"><use href="#dng"/></svg></div><span class="d-flex align-items-center" data-icons="s4 nextg ~ tree2 books glass wins pwin brush pulse - xcirc - gearc"></span></div><div class="tend"></div></div>
    <div class="tbar d-flex"><div class="tbody d-flex align-items-center" data-icons="G9 cursorg oneb rulg - agr - zing zoomg zoutg"></div><div class="tend"></div></div>
  </div>
  <div class="tbrow d-flex">
    <div class="tbar d-flex me-0"><div class="tbody d-flex align-items-center"><i class="grip"></i><div class="combo d-flex justify-content-end align-items-center" style="width:146px"><svg width="9" height="9"><use href="#dng"/></svg></div><div class="combo d-flex justify-content-between align-items-center ms-1" style="width:146px"><span>Arial</span><svg width="9" height="9"><use href="#dng"/></svg></div><span class="d-flex align-items-center ser" style="margin-left:1px"><u class="icn">U</u><s class="icn">U</s><span class="icn">B</span></span></div><div class="tend"></div></div>
    <div class="tbar"><div class="tbody d-flex align-items-center" data-icons="G10 bchip s1"></div></div>
  </div>
  <div class="tbrow d-flex" style="height:25px">
    <div class="tbar d-flex"><div class="tbody d-flex align-items-center" data-icons="G10 blkg - slid slids rult"></div><div class="tend"></div></div>
  </div>

  <div class="d-flex" style="height:842px">
    <div class="nav-wrap">
      <div class="phead d-flex align-items-center justify-content-between"><span>Navigator</span>
        <svg width="60" height="12" viewBox="0 0 60 12" fill="none" stroke="#000" stroke-width="1.600"><path d="M2 4V2h4v3L4 6.500V8M4 9.500V11"/><path d="M17 4.500h9L21.500 9z" fill="#000" stroke="none"/><path d="M36 2h4v5h-4zM34.500 7.500h7M38 8v3.500M40 2v5" stroke-width="1.200"/><path d="M51 2l7 7.500M58 2l-7 7.500" stroke-width="1.700"/></svg></div>
      <div class="navtabs d-flex align-items-end">
        <div class="ntab act d-flex align-items-center"><svg width="17" height="17" class="ms-1 me-1"><use href="#treei"/></svg><span>项目</span></div>
        <div class="ntab d-flex align-items-center"><svg width="17" height="17" class="me-1"><use href="#treei"/></svg><span style="font-size:12.500px">Project</span></div>
      </div>
      <div class="treebox" id="tree">
        <svg class="lines" width="200" height="400" fill="none" stroke="#777" stroke-dasharray="1 1" shape-rendering="crispEdges"><path d="M20 12.500h7M33.500 22v46M34 32.500h11M39 52.500h6M52.500 62v6M58 72.500h6M71.500 82v6M77 92.500h6M90.500 102v6M96 112.500h6M90.500 118v274M91 392.500h12M109.500 122v250"/><path id="stubs" d=""/></svg>
        <div class="trow l0"><i class="exp o"></i><svg width="16" height="16"><use href="#proj"/></svg>Project1</div>
        <div class="trow l1"><i class="exp"></i><svg width="16" height="16"><use href="#treed"/></svg>Boards</div>
        <div class="trow l1"><i class="exp o"></i><svg width="16" height="16"><use href="#treey"/></svg>Blocks</div>
        <div class="trow l2"><i class="exp o"></i><svg width="16" height="16"><use href="#sch"/></svg>schematic1</div>
        <div class="trow l3"><i class="exp o"></i><svg width="16" height="16"><use href="#page"/></svg><span class="pgno">1</span></div>
        <div class="trow l4"><i class="exp o"></i><svg width="16" height="16"><use href="#fold"/></svg>Symbols</div>
        <div class="trow l4" id="nets"><i class="exp"></i><svg width="16" height="16"><use href="#fold"/></svg>Nets</div>
      </div>
    </div>

    <div class="rcol">
      <div class="d-flex" style="height:606px">
        <div>
          <div class="mditabs d-flex justify-content-between">
            <svg class="mditab" width="150" height="24" viewBox="751 175 150 24"><defs><linearGradient id="tg" x2="0" y2="1"><stop stop-color="#cdf6fe"/><stop offset="1" stop-color="#b3d9f2"/></linearGradient></defs><path d="M756 199L774 179q2-1.500 4-1.500h114.500q2 0 2 2V199z" fill="url(#tg)"/><path d="M756 198.500L774 179q2-1.500 4-1.500h114.500q2 0 2 2V199" fill="none" stroke="#9fa3a8"/>
              <path d="M779.500 179.500h9l3 3v11h-12z" fill="#f5f7fa" stroke="#8994a6"/><path d="M775 181h9v9h-9z" fill="#49a52c"/><path d="M777 184h3v4h-3M780 184h2v4" fill="none" stroke="#fff"/><path d="M880 184.500l6 7M886 184.500l-6 7" stroke="#000" stroke-width="1.600"/><text x="800.500" y="191" font-size="11.800" textLength="70">schematic1.1</text></svg>
            <svg width="20" height="23" viewBox="0 0 20 23"><path d="M3 10h9.500l-4.700 5z"/></svg>
          </div>
          <div class="mdi"><div class="mdi-in">
            <div class="d-flex">
              <svg width="1084" height="555" viewBox="757 204 1084 555" shape-rendering="crispEdges" class="d-block bg-white"><path id="gridlines" d="" stroke="#f0f0f0"/><g id="parts" fill="none"></g></svg>
              <div class="vsb d-flex flex-column align-items-center"><svg width="15" height="266" viewBox="0 0 15 266"><path d="M4 11l3.500-3.500L11 11" fill="none" stroke="#505050" stroke-width="2"/></svg><div class="thumb vthumb w-100"></div><svg width="15" height="83" viewBox="0 0 15 83"><path d="M4 71l3.500 3.500L11 71" fill="none" stroke="#505050" stroke-width="2"/></svg></div>
            </div>
            <div class="d-flex align-items-center" style="height:15px"><svg width="107" height="15"><path d="M11 4L7.500 7.500 11 11" fill="none" stroke="#505050" stroke-width="2"/></svg><div class="thumb hthumb h-100"></div><svg width="452" height="15"><path d="M440.500 4l3.500 3.500-3.500 3.500" fill="none" stroke="#505050" stroke-width="2"/></svg></div>
          </div></div>
        </div>
        <div class="props">
          <div class="phead d-flex align-items-center">Properties</div>
          <div class="pgrid"><div class="ptop"></div>
            <div class="prow sol">Property</div><div class="prow">Name</div><div class="prow">Drawing</div><div class="prow">Orientation</div><div class="prow">Width</div><div class="prow">Height</div><div class="prow sol"></div>
            <div class="phelp"></div></div>
          <div class="d-flex text-nowrap"><div class="ptab bg-white d-flex align-items-center"><svg width="16" height="16" class="ms-1 flex-shrink-0"><use href="#props"/></svg><span style="padding-left:2px">Pro</span></div><div class="ptab2 bg-white"><svg width="16" height="16"><use href="#tree2"/></svg></div></div>
        </div>
      </div>

      <div class="phead tall d-flex align-items-center">Search</div>
      <div class="searchp">
        <div class="sblue"><div class="sinput d-flex align-items-center">
          <span class="sbtn"><svg width="12" height="12"><path d="M2 2l8 8M10 2l-8 8" stroke="#4a74b0" stroke-width="2"/></svg></span>
          <span class="sbtn"><svg width="12" height="12"><path d="M1.500 5.500C2 1 8 0 10 4M10.500 6.500C10 11 4 12 2 8M10.500 1v3.500H7M1.500 11V7.500H5" fill="none" stroke="#4a74b0" stroke-width="1.500"/></svg></span>
          <span class="sbtn"><svg width="12" height="12"><path d="M1 3l5 5.500L11 3" fill="none" stroke="#4a74b0" stroke-width="2.400"/></svg></span>
          <span class="mono">Enter search criteria...</span></div></div>
        <div class="sgray"><div class="otype d-flex align-items-center justify-content-between"><span>Object Type</span><svg width="15" height="16" viewBox="0 0 15 16"><path d="M6 9.500L1.500 14" stroke="#46618f" stroke-width="2.400"/><circle cx="9" cy="6" r="4" fill="#f4f7fb" stroke="#46618f" stroke-width="1.800"/></svg></div></div>
        <div class="redbar d-flex align-items-center">No records found!</div>
        <div class="stabs d-flex">
          <svg width="61" height="17" viewBox="755 891 61 17" fill="#000"><path d="M759.500 896h1.500v8h-1.500zM766 896v8l-4-4zM805 896v8l4-4zM809.500 896h1.500v8h-1.500z"/><path d="M780.500 896v8l-4-4zM791.500 896v8l4-4z" fill="none" stroke="#000"/></svg>
          <div class="stab act d-flex align-items-center justify-content-end" style="width:102px"><span>Design - All</span><svg width="9" height="9"><path d="M1 1l6.500 7M7.500 1L1 8" stroke="#000" stroke-width="1.600"/></svg></div>
          <div class="stab" style="width:87px">Design - Parts</div><div class="stab" style="width:85px">Design - Nets</div><div class="stab" style="width:105px">Library - Symbols</div><div class="stab" style="width:87px">Library - Parts</div><div class="stab" style="width:34px"><svg width="12" height="12" class="me-2"><path d="M4 1h3v3h3v3H7v3H4V7H1V4h3z" fill="#b9e22a" stroke="#4b7a10"/></svg></div>
        </div>
      </div>
      <div class="phead tall d-flex align-items-center"><span style="letter-spacing:.1px">Output</span></div>
      <div class="outp"></div>
      <div class="otabs"><svg width="1169" height="17" viewBox="751 999 1169 17" class="d-block"><path d="M752 999v17" stroke="#6b6b6b" stroke-width="2"/><path d="M754 1000h16v16h-16zM772 1000h16v16h-16z" fill="#cdcdcd"/><path d="M764 1003.500v9l-5-4.500zM778 1003.500v9l5-4.500z" fill="#8f8f8f"/><path d="M790 999l6 16.500h34.500l5-16.500z" fill="#fff"/><path d="M789.500 999l6 16.500M835 999.500h1085M830.500 1015.500l5-16M840.500 1015.500l-5-16M870 1015.500l5-16M875.500 1015.500l-5-16M910.500 1015.500l5-16M917 1015.500l-5.500-16M1067 1015.500l5.500-16" fill="none" stroke="#000" stroke-width="1.100"/><path d="M796 1015.500h34M841 1015.500h29M876 1015.500h34M917 1015.500h150" stroke="#888"/><g font-size="12" letter-spacing="0"><text x="798" y="1011.500" font-weight="700" textLength="25">输出</text><text x="841" y="1011" textLength="20" lengthAdjust="spacingAndGlyphs">iCES</text><text x="879" y="1011.500" textLength="25">错误</text><text x="931" y="1011" textLength="119" lengthAdjust="spacingAndGlyphs">EDIF Schematic Exporter</text></g></svg></div>
    </div>
  </div>
  <div class="sts d-flex mt-auto">
    <div style="width:779px;padding-left:6px">0 objects selected</div><div style="width:66px;padding-left:4px">Select</div><div style="width:112px;padding-left:4px">8.086, 2.409 in</div><div style="width:167px;padding-left:4px">DX=0.024, DY=0.016 in</div><div style="width:59px;padding-left:4px">Sheet 1</div><div style="width:28px;padding-left:4px;color:#909090">CAP</div><div style="width:26px"></div>
    <div style="width:22px"><svg width="14" height="14"><defs><radialGradient id="ball" cx=".35" cy=".3"><stop stop-color="#8df06a"/><stop offset="1" stop-color="#149412"/></radialGradient></defs><circle cx="6.500" cy="6.500" r="5.500" fill="url(#ball)"/></svg></div>
    <div style="width:22px;padding-left:4px"><svg width="16" height="17" viewBox="0 0 16 17"><path d="M12 12l3 4" stroke="#7e92b8" stroke-width="2.400"/><circle cx="7.500" cy="7.500" r="6.700" fill="#e5ecf7" stroke="#5f7098"/><path d="M7.500 2.500v10M2.500 7.500h10M6 4l1.500-1.500L9 4M6 11l1.500 1.500L9 11M4 6L2.500 7.500 4 9M11 6l1.500 1.500L11 9" fill="none" stroke="#24365e" stroke-width="1.100"/></svg></div>
    <div style="width:186px;padding-left:4px;letter-spacing:-.35px">Online - local</div>
  </div>
</div>
<script>
// Expand each toolbar's icon list: "-" separator, "~" slim separator, "v"/"x" drop arrow, "*name" pressed, "sN" spacer, "GN" grip
document.querySelectorAll('[data-icons]').forEach(function (bar) {
  bar.innerHTML = bar.dataset.icons.split(' ').map(function (t) {
    if (t === '-') return '<i class="sep"></i>';
    if (t === '~') return '<i class="sep slim"></i>';
    if (t === 'v') return '<span class="dar"><svg width="9" height="9"><use href="#dn"/></svg></span>';
    if (t === 'x') return '<span class="dar"><svg width="9" height="9"><use href="#dng"/></svg></span>';
    if (t === '=A') return '<span class="icn ser" style="color:#3c3c40;font-size:15px">A</span>';
    if (/^s\d$/.test(t)) return '<i class="flex-shrink-0" style="width:' + t[1] + 'px"></i>';
    if (/^G\d+$/.test(t)) return '<i class="grip g' + t.slice(1) + '"></i>';
    var on = t[0] === '*';
    return '<span class="icn' + (on ? ' on' : '') + '"><svg width="16" height="16"><use href="#' + (on ? t.slice(1) : t) + '"/></svg></span>';
  }).join('');
});
document.querySelectorAll('.tend').forEach(function (e) { e.innerHTML = '<svg width="8" height="8"><use href="#ofl"/></svg>'; });

// Symbol instances in the navigator
var stub = '';
[201, 208, 215, 222, 229, 243, 250, 313, 327, 334, 348, 362, 369].forEach(function (n, i) {
  document.getElementById('nets').insertAdjacentHTML('beforebegin', '<div class="trow l5"><i class="exp"></i><svg width="16" height="16"><use href="#symb"/></svg>$1I' + n + '</div>');
  stub += 'M110 ' + (132.5 + 20 * i) + 'h11';
});
document.getElementById('stubs').setAttribute('d', stub);

// Sheet grid
var d = '', k;
for (k = 0; k < 85; k++) d += 'M' + (Math.floor(766.3 + 12.69 * k) + .5) + ' 204V758';
for (k = 0; k < 44; k++) d += 'M757 ' + (Math.floor(207 + 12.68 * k) + .5) + 'H1840';
document.getElementById('gridlines').setAttribute('d', d);

// Placed parts: x, y, width, orientation, first pin label, second pin label
var g = '';
[[981, 436, 76, 'v', 1, 2],
 [1146, 246, 76, 'v', 1, 2], [1285, 246, 77, 'v', 2, 1], [1425, 246, 76, 'v', 1, 2],
 [1146, 372, 76, 'h', 1, 2], [1285, 372, 77, 'h', 1, 2], [1425, 372, 76, 'h', 2, 1],
 [1146, 499, 76, 'v', 2, 1], [1285, 499, 77, 'v', 1, 2], [1425, 499, 76, 'v', 2, 1],
 [1146, 626, 76, 'h', 2, 1], [1285, 626, 77, 'h', 2, 1], [1425, 626, 76, 'h', 1, 2]].forEach(function (p) {
  var x = p[0], y = p[1], w = p[2], m = 38.5, h = y === 372 ? 77 : 76, f = ' font-family="Liberation Sans" fill="#000" stroke="none" ';
  g += '<rect x="' + (x + .5) + '" y="' + (y + .5) + '" width="' + w + '" height="' + h + '" stroke="#800080"/>';
  if (p[3] === 'v') {
    g += '<path stroke="#5a5a5a" d="M' + (x + m) + ' ' + (y - 26) + 'v26M' + (x + m) + ' ' + (y + h + 1) + 'v25"/>';
    g += '<text' + f + 'font-size="11" transform="translate(' + (x + 41) + ' ' + (y + 6.5) + ') rotate(-90)">' + p[4] + '</text>';
    g += '<text' + f + 'font-size="11" transform="translate(' + (x + 41) + ' ' + (y + 75.5) + ') rotate(-90)">' + p[5] + '</text>';
  } else {
    g += '<path stroke="#5a5a5a" d="M' + (x - 26) + ' ' + (y + m) + 'h26M' + (x + w + 1) + ' ' + (y + m) + 'h25"/>';
    g += '<text' + f + 'font-size="10" x="' + x + '" y="' + (y + 41) + '">' + p[4] + '</text>';
    g += '<text' + f + 'font-size="10" x="' + (x + w - 6) + '" y="' + (y + 41) + '">' + p[5] + '</text>';
  }
});
document.getElementById('parts').innerHTML = g;
</script>
</body>
</html>
